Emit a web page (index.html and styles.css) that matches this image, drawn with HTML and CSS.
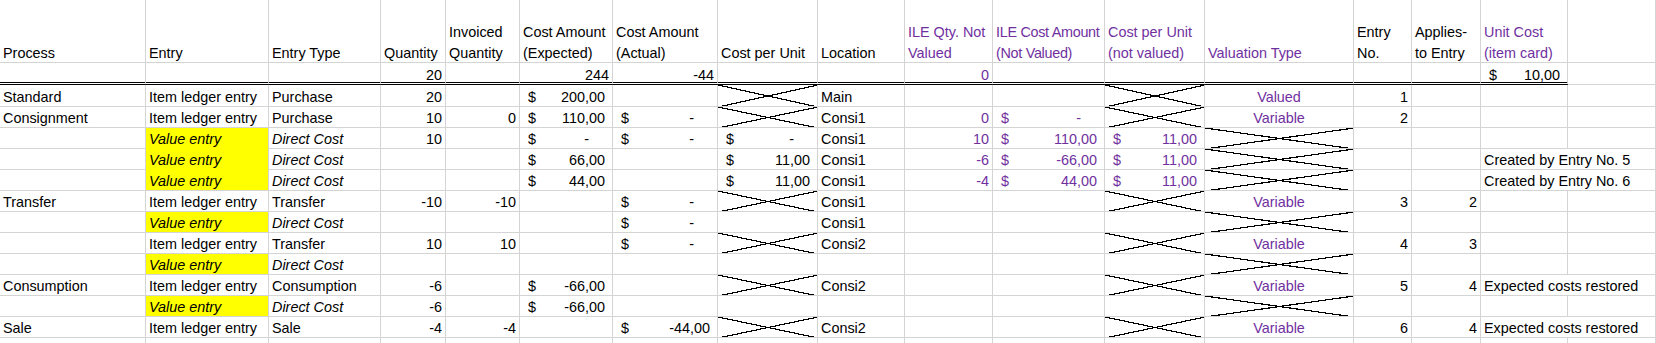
FILE: index.html
```html
<!DOCTYPE html>
<html lang="en">
<head>
<meta charset="utf-8">
<title>Item ledger entries</title>
<link rel="stylesheet" href="styles.css">
</head>
<body>
<div class="sheet">
  <!-- header -->
  <div class="c h"><span class="ht">Process</span></div>
  <div class="c h"><span class="ht">Entry</span></div>
  <div class="c h"><span class="ht">Entry Type</span></div>
  <div class="c h"><span class="ht">Quantity</span></div>
  <div class="c h"><span class="ht">Invoiced<br>Quantity</span></div>
  <div class="c h"><span class="ht">Cost Amount<br>(Expected)</span></div>
  <div class="c h"><span class="ht">Cost Amount<br>(Actual)</span></div>
  <div class="c h"><span class="ht">Cost per Unit</span></div>
  <div class="c h"><span class="ht">Location</span></div>
  <div class="c h p"><span class="ht">ILE Qty. Not<br>Valued</span></div>
  <div class="c h p tight"><span class="ht">ILE Cost Amount<br>(Not Valued)</span></div>
  <div class="c h p"><span class="ht">Cost per Unit<br>(not valued)</span></div>
  <div class="c h p"><span class="ht">Valuation Type</span></div>
  <div class="c h"><span class="ht">Entry<br>No.</span></div>
  <div class="c h"><span class="ht">Applies-<br>to Entry</span></div>
  <div class="c h p"><span class="ht">Unit Cost<br>(item card)</span></div>
  <div class="c h"></div>

  <!-- totals -->
  <div class="c sm"></div>
  <div class="c sm"></div>
  <div class="c sm"></div>
  <div class="c sm r">20</div>
  <div class="c sm"></div>
  <div class="c sm r">244</div>
  <div class="c sm r">-44</div>
  <div class="c sm"></div>
  <div class="c sm"></div>
  <div class="c sm r p">0</div>
  <div class="c sm"></div>
  <div class="c sm"></div>
  <div class="c sm"></div>
  <div class="c sm"></div>
  <div class="c sm"></div>
  <div class="c sm acc"><span>$</span><span>10,00</span></div>
  <div class="c smq"></div>

  <!-- row 1 -->
  <div class="c">Standard</div>
  <div class="c">Item ledger entry</div>
  <div class="c">Purchase</div>
  <div class="c r">20</div>
  <div class="c"></div>
  <div class="c acc"><span>$</span><span>200,00</span></div>
  <div class="c"></div>
  <div class="c x"></div>
  <div class="c">Main</div>
  <div class="c"></div>
  <div class="c"></div>
  <div class="c x"></div>
  <div class="c ctr p">Valued</div>
  <div class="c r">1</div>
  <div class="c"></div>
  <div class="c"></div>
  <div class="c"></div>

  <!-- row 2 -->
  <div class="c">Consignment</div>
  <div class="c">Item ledger entry</div>
  <div class="c">Purchase</div>
  <div class="c r">10</div>
  <div class="c r">0</div>
  <div class="c acc"><span>$</span><span>110,00</span></div>
  <div class="c acc"><span>$</span><span class="z">-</span></div>
  <div class="c x"></div>
  <div class="c">Consi1</div>
  <div class="c r p">0</div>
  <div class="c acc p"><span>$</span><span class="z">-</span></div>
  <div class="c x"></div>
  <div class="c ctr p">Variable</div>
  <div class="c r">2</div>
  <div class="c"></div>
  <div class="c"></div>
  <div class="c"></div>

  <!-- row 3 -->
  <div class="c"></div>
  <div class="c y yc i">Value entry</div>
  <div class="c i">Direct Cost</div>
  <div class="c r">10</div>
  <div class="c"></div>
  <div class="c acc"><span>$</span><span class="z">-</span></div>
  <div class="c acc"><span>$</span><span class="z">-</span></div>
  <div class="c acc"><span>$</span><span class="z">-</span></div>
  <div class="c">Consi1</div>
  <div class="c r p">10</div>
  <div class="c acc p"><span>$</span><span>110,00</span></div>
  <div class="c acc p"><span>$</span><span>11,00</span></div>
  <div class="c x"></div>
  <div class="c"></div>
  <div class="c"></div>
  <div class="c"></div>
  <div class="c"></div>

  <!-- row 4 -->
  <div class="c"></div>
  <div class="c y yc i">Value entry</div>
  <div class="c i">Direct Cost</div>
  <div class="c"></div>
  <div class="c"></div>
  <div class="c acc"><span>$</span><span>66,00</span></div>
  <div class="c"></div>
  <div class="c acc"><span>$</span><span>11,00</span></div>
  <div class="c">Consi1</div>
  <div class="c r p">-6</div>
  <div class="c acc p"><span>$</span><span>-66,00</span></div>
  <div class="c acc p"><span>$</span><span>11,00</span></div>
  <div class="c x"></div>
  <div class="c"></div>
  <div class="c"></div>
  <div class="c s2">Created by Entry No. 5</div>

  <!-- row 5 -->
  <div class="c"></div>
  <div class="c y i">Value entry</div>
  <div class="c i">Direct Cost</div>
  <div class="c"></div>
  <div class="c"></div>
  <div class="c acc"><span>$</span><span>44,00</span></div>
  <div class="c"></div>
  <div class="c acc"><span>$</span><span>11,00</span></div>
  <div class="c">Consi1</div>
  <div class="c r p">-4</div>
  <div class="c acc p"><span>$</span><span>44,00</span></div>
  <div class="c acc p"><span>$</span><span>11,00</span></div>
  <div class="c x"></div>
  <div class="c"></div>
  <div class="c"></div>
  <div class="c s2">Created by Entry No. 6</div>

  <!-- row 6 -->
  <div class="c">Transfer</div>
  <div class="c">Item ledger entry</div>
  <div class="c">Transfer</div>
  <div class="c r">-10</div>
  <div class="c r">-10</div>
  <div class="c"></div>
  <div class="c acc"><span>$</span><span class="z">-</span></div>
  <div class="c x"></div>
  <div class="c">Consi1</div>
  <div class="c"></div>
  <div class="c"></div>
  <div class="c x"></div>
  <div class="c ctr p">Variable</div>
  <div class="c r">3</div>
  <div class="c r">2</div>
  <div class="c"></div>
  <div class="c"></div>

  <!-- row 7 -->
  <div class="c"></div>
  <div class="c y i">Value entry</div>
  <div class="c i">Direct Cost</div>
  <div class="c"></div>
  <div class="c"></div>
  <div class="c"></div>
  <div class="c acc"><span>$</span><span class="z">-</span></div>
  <div class="c"></div>
  <div class="c">Consi1</div>
  <div class="c"></div>
  <div class="c"></div>
  <div class="c"></div>
  <div class="c x"></div>
  <div class="c"></div>
  <div class="c"></div>
  <div class="c"></div>
  <div class="c"></div>

  <!-- row 8 -->
  <div class="c"></div>
  <div class="c">Item ledger entry</div>
  <div class="c">Transfer</div>
  <div class="c r">10</div>
  <div class="c r">10</div>
  <div class="c"></div>
  <div class="c acc"><span>$</span><span class="z">-</span></div>
  <div class="c x"></div>
  <div class="c">Consi2</div>
  <div class="c"></div>
  <div class="c"></div>
  <div class="c x"></div>
  <div class="c ctr p">Variable</div>
  <div class="c r">4</div>
  <div class="c r">3</div>
  <div class="c"></div>
  <div class="c"></div>

  <!-- row 9 -->
  <div class="c"></div>
  <div class="c y i">Value entry</div>
  <div class="c i">Direct Cost</div>
  <div class="c"></div>
  <div class="c"></div>
  <div class="c"></div>
  <div class="c"></div>
  <div class="c"></div>
  <div class="c"></div>
  <div class="c"></div>
  <div class="c"></div>
  <div class="c"></div>
  <div class="c x"></div>
  <div class="c"></div>
  <div class="c"></div>
  <div class="c"></div>
  <div class="c"></div>

  <!-- row 10 -->
  <div class="c">Consumption</div>
  <div class="c">Item ledger entry</div>
  <div class="c">Consumption</div>
  <div class="c r">-6</div>
  <div class="c"></div>
  <div class="c acc"><span>$</span><span>-66,00</span></div>
  <div class="c"></div>
  <div class="c x"></div>
  <div class="c">Consi2</div>
  <div class="c"></div>
  <div class="c"></div>
  <div class="c x"></div>
  <div class="c ctr p">Variable</div>
  <div class="c r">5</div>
  <div class="c r">4</div>
  <div class="c s2">Expected costs restored</div>

  <!-- row 11 -->
  <div class="c"></div>
  <div class="c y i">Value entry</div>
  <div class="c i">Direct Cost</div>
  <div class="c r">-6</div>
  <div class="c"></div>
  <div class="c acc"><span>$</span><span>-66,00</span></div>
  <div class="c"></div>
  <div class="c"></div>
  <div class="c"></div>
  <div class="c"></div>
  <div class="c"></div>
  <div class="c"></div>
  <div class="c x"></div>
  <div class="c"></div>
  <div class="c"></div>
  <div class="c"></div>
  <div class="c"></div>

  <!-- row 12 -->
  <div class="c">Sale</div>
  <div class="c">Item ledger entry</div>
  <div class="c">Sale</div>
  <div class="c r">-4</div>
  <div class="c r">-4</div>
  <div class="c"></div>
  <div class="c acc"><span>$</span><span>-44,00</span></div>
  <div class="c x"></div>
  <div class="c">Consi2</div>
  <div class="c"></div>
  <div class="c"></div>
  <div class="c x"></div>
  <div class="c ctr p">Variable</div>
  <div class="c r">6</div>
  <div class="c r">4</div>
  <div class="c s2">Expected costs restored</div>

  <!-- row 13 (empty) -->
  <div class="c"></div>
  <div class="c"></div>
  <div class="c"></div>
  <div class="c"></div>
  <div class="c"></div>
  <div class="c"></div>
  <div class="c"></div>
  <div class="c"></div>
  <div class="c"></div>
  <div class="c"></div>
  <div class="c"></div>
  <div class="c"></div>
  <div class="c"></div>
  <div class="c"></div>
  <div class="c"></div>
  <div class="c"></div>
  <div class="c"></div>
</div>
</body>
</html>
```

FILE: styles.css
```css
html, body {
  margin: 0;
  padding: 0;
  background: #ffffff;
}

body {
  font-family: "Liberation Sans", Arial, sans-serif;
  font-size: 14.4px;
  color: #000000;
  overflow: hidden;
}

.sheet {
  display: grid;
  grid-template-columns: 146px 123px 112px 65px 74px 93px 105px 100px 87px 88px 112px 100px 149px 58px 69px 87px 88px;
  grid-template-rows: 63px 22px 22px repeat(11, 21px) 21px;
  width: 1656px;
}

.c {
  box-sizing: border-box;
  min-width: 0;
  border-right: 1px solid #d4d4d4;
  border-bottom: 1px solid #d4d4d4;
  padding: 0 3px;
  display: flex;
  align-items: flex-end;
  white-space: nowrap;
  line-height: 18px;
}

.h {
  line-height: 21px;
}

.ht {
  display: block;
  margin-bottom: -1.5px;
}

.tight {
  letter-spacing: -0.3px;
}

.sm {
  border-bottom: 3px double #000000;
  line-height: 14px;
}

.smq {
  line-height: 14px;
}

.r {
  justify-content: flex-end;
}

.ctr {
  justify-content: center;
}

.p {
  color: #7030a0;
}

.i {
  font-style: italic;
}

.y {
  background-color: #ffff00;
}

.yc {
  border-bottom-color: #ffff00;
}

.acc {
  justify-content: space-between;
  padding: 0 7px 0 8px;
}

.z {
  margin-right: 2ch;
}

.s2 {
  grid-column: span 2;
}

.x {
  background-image:
    linear-gradient(to top right, transparent calc(50% - 0.6px), #000 calc(50% - 0.6px), #000 calc(50% + 0.6px), transparent calc(50% + 0.6px)),
    linear-gradient(to bottom right, transparent calc(50% - 0.6px), #000 calc(50% - 0.6px), #000 calc(50% + 0.6px), transparent calc(50% + 0.6px));
  background-origin: border-box;
  background-repeat: no-repeat;
  background-size: 100% 100%;
}
```
